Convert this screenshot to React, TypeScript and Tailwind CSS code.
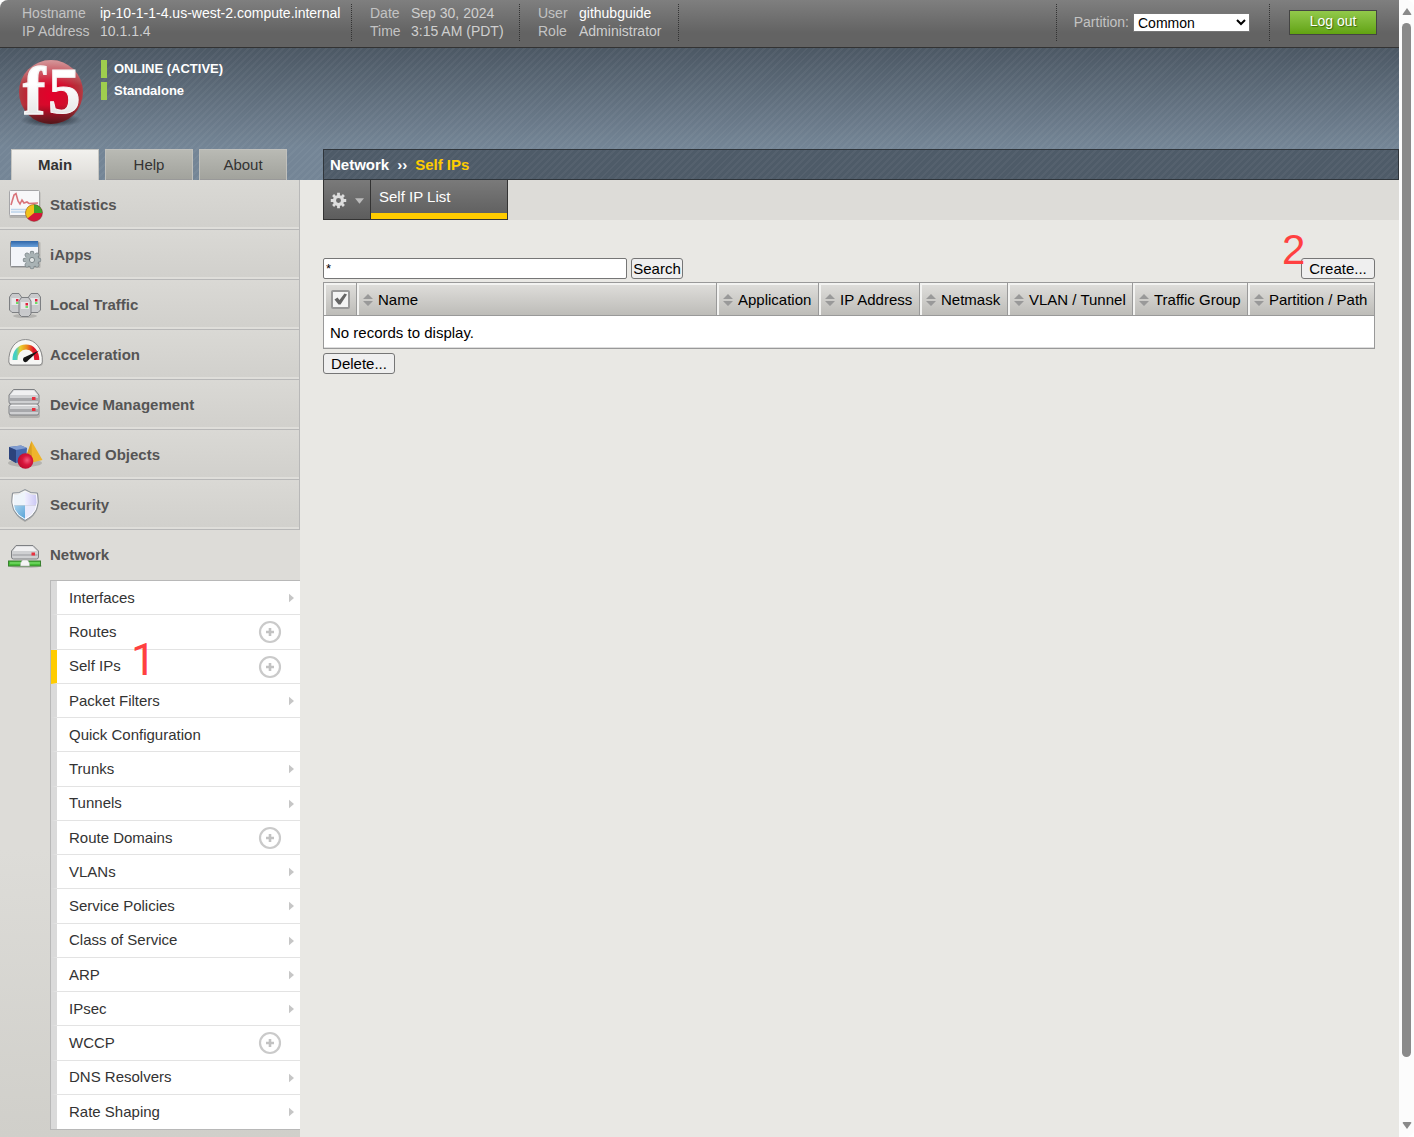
import React from "react";

const navItems = [
  { label: "Statistics", icon: <StatisticsIcon /> },
  { label: "iApps", icon: <AppsIcon /> },
  { label: "Local Traffic", icon: <TrafficIcon /> },
  { label: "Acceleration", icon: <GaugeIcon /> },
  { label: "Device Management", icon: <DevicesIcon /> },
  { label: "Shared Objects", icon: <ShapesIcon /> },
  { label: "Security", icon: <ShieldIcon /> },
];

type Mark = "arrow" | "plus" | "none";

const subItems: { label: string; mark: Mark; active?: boolean }[] = [
  { label: "Interfaces", mark: "arrow" },
  { label: "Routes", mark: "plus" },
  { label: "Self IPs", mark: "plus", active: true },
  { label: "Packet Filters", mark: "arrow" },
  { label: "Quick Configuration", mark: "none" },
  { label: "Trunks", mark: "arrow" },
  { label: "Tunnels", mark: "arrow" },
  { label: "Route Domains", mark: "plus" },
  { label: "VLANs", mark: "arrow" },
  { label: "Service Policies", mark: "arrow" },
  { label: "Class of Service", mark: "arrow" },
  { label: "ARP", mark: "arrow" },
  { label: "IPsec", mark: "arrow" },
  { label: "WCCP", mark: "plus" },
  { label: "DNS Resolvers", mark: "arrow" },
  { label: "Rate Shaping", mark: "arrow" },
];

const columns = [
  { label: "Name", width: "" },
  { label: "Application", width: "w-[102px]" },
  { label: "IP Address", width: "w-[101px]" },
  { label: "Netmask", width: "w-[88px]" },
  { label: "VLAN / Tunnel", width: "w-[125px]" },
  { label: "Traffic Group", width: "w-[115px]" },
  { label: "Partition / Path", width: "w-[127px]" },
];

function Logo() {
  return (
    <svg viewBox="0 0 72 72" className="h-[72px] w-[72px] overflow-visible" role="img" aria-label="f5">
      <defs>
        <radialGradient id="ball" cx="0.5" cy="0.55" r="0.55">
          <stop offset="0" stopColor="#e4002b" />
          <stop offset="0.45" stopColor="#d20d2b" />
          <stop offset="0.8" stopColor="#b5303a" />
          <stop offset="1" stopColor="#b4444a" />
        </radialGradient>
        <linearGradient id="ballShade" x1="0" y1="0" x2="0" y2="1">
          <stop offset="0" stopColor="#fff" stopOpacity="0.45" />
          <stop offset="0.4" stopColor="#fff" stopOpacity="0" />
          <stop offset="0.7" stopColor="#000" stopOpacity="0" />
          <stop offset="1" stopColor="#000" stopOpacity="0.55" />
        </linearGradient>
        <linearGradient id="letters" x1="0" y1="0" x2="0" y2="1">
          <stop offset="0.4" stopColor="#fff" />
          <stop offset="1" stopColor="#dcdcdc" />
        </linearGradient>
        <radialGradient id="ballShadow">
          <stop offset="0" stopColor="#111820" stopOpacity="0.9" />
          <stop offset="1" stopColor="#111820" stopOpacity="0" />
        </radialGradient>
      </defs>
      <ellipse cx="36" cy="62" rx="31" ry="7" fill="url(#ballShadow)" />
      <circle cx="36" cy="34" r="32" fill="url(#ball)" />
      <circle cx="36" cy="34" r="32" fill="url(#ballShade)" />
      <g fontFamily="Liberation Serif, serif" fontWeight="700" fill="url(#letters)" stroke="#f6f6f6">
        <text x="8" y="56" fontSize="67" strokeWidth="1.500">
          f
        </text>
        <text x="33" y="55" fontSize="65" strokeWidth="1">
          5
        </text>
      </g>
    </svg>
  );
}

function StatisticsIcon() {
  return (
    <svg viewBox="0 0 36 36" className="h-9 w-9">
      <rect x="1.500" y="4" width="31" height="26" rx="1" fill="#000" opacity="0.15" />
      <rect x="1.500" y="2.500" width="30" height="25" rx="1" fill="#f7f7f9" stroke="#a5a5a8" />
      <path d="M3 17 6 7 8 5.500 10 13 12 16 14 12 16 15 19 14 21 15.500 30 15" fill="none" stroke="#d9747a" strokeWidth="1.600" />
      <path d="M3 21.500h20M3 24h17" stroke="#bcd3ea" strokeWidth="1.500" />
      <circle cx="26" cy="25" r="8.500" fill="#d3173a" />
      <path d="M26 25V16.500a8.500 8.500 0 0 0-6.500 14z" fill="#f1c21b" />
      <path d="M26 25V16.500a8.500 8.500 0 0 1 8.500 8.500z" fill="#3fa32c" />
      <circle cx="26" cy="25" r="8.500" fill="none" stroke="#5b3b1d" strokeOpacity="0.5" strokeWidth="0.700" />
    </svg>
  );
}

function Gear({ fill, stroke, hole }: { fill: string; stroke: string; hole: string }) {
  return (
    <>
      <g stroke={stroke} strokeWidth="4.600" strokeLinecap="round">
        <path d="M0-7V7M-7 0H7M-5-5 5 5M5-5-5 5" />
      </g>
      <g stroke={fill} strokeWidth="3.200" strokeLinecap="round">
        <path d="M0-7V7M-7 0H7M-5-5 5 5M5-5-5 5" />
      </g>
      <circle r="6.500" fill={fill} />
      <circle r="2.600" fill={hole} stroke={stroke} />
    </>
  );
}

function AppsIcon() {
  return (
    <svg viewBox="0 0 36 36" className="h-9 w-9">
      <defs>
        <linearGradient id="titleBar" x1="0" y1="0" x2="0" y2="1">
          <stop offset="0" stopColor="#2f66a8" />
          <stop offset="1" stopColor="#6aa0da" />
        </linearGradient>
      </defs>
      <rect x="2.500" y="4" width="30" height="26" rx="1" fill="#000" opacity="0.15" />
      <rect x="2.500" y="3.500" width="28" height="25" rx="1" fill="#f3f5f9" stroke="#8b8d90" />
      <rect x="3" y="3" width="27" height="6" fill="url(#titleBar)" />
      <g transform="translate(24 22)">
        <Gear fill="#a9b3b5" stroke="#7d878a" hole="#dfe3e3" />
      </g>
    </svg>
  );
}

function TrafficIcon() {
  const server = (
    <>
      <path d="M.5 4 3 .5h7L12.500 4v13L10 19.500H3L.5 17z" fill="#c9cacc" stroke="#7d7f82" />
      <path d="M2.500 5h8v11h-8z" fill="#e6e6e8" />
      <path d="M2.500 13h8M2.500 15h8" stroke="#aaabae" />
      <rect x="7" y="6" width="2.500" height="2.500" fill="#e0223c" />
      <rect x="7" y="9" width="2.500" height="2" fill="#6fdc6a" />
    </>
  );
  return (
    <svg viewBox="0 0 36 36" className="h-9 w-9">
      <ellipse cx="17" cy="28" rx="12" ry="2" fill="#000" opacity="0.15" />
      <g transform="translate(1 5)">{server}</g>
      <g transform="translate(20 5)">{server}</g>
      <g transform="translate(10.500 9)">{server}</g>
    </svg>
  );
}

function GaugeIcon() {
  return (
    <svg viewBox="0 0 36 36" className="h-9 w-9">
      <defs>
        <linearGradient id="dial" x1="0" y1="0" x2="1" y2="0">
          <stop offset="0.050" stopColor="#43cfc4" />
          <stop offset="0.250" stopColor="#e8cf2f" />
          <stop offset="0.550" stopColor="#ee8a1c" />
          <stop offset="0.850" stopColor="#e0162b" />
        </linearGradient>
      </defs>
      <path d="M.8 25C-.5 12 7 2.500 18 2.500S36 12 35 25q-.3 3-3 3H3.500Q1 28 .8 25z" fill="#000" opacity="0.150" />
      <path d="M.8 24C.3 11 7.500 1.500 17.500 1.500S35 11 34.300 24q-.2 3-3 3h-27q-3 0-3.500-3z" fill="#f7f7f5" stroke="#8b8b8b" />
      <path d="M7 22C7 14 11.500 9 18 9s10.800 5 10.800 13" fill="none" stroke="url(#dial)" strokeWidth="5" />
      <path d="M31 12.500 20 22.500a2.600 2.600 0 1 1-3-3.500z" fill="#151515" />
    </svg>
  );
}

function DiskUnit() {
  return (
    <>
      <path d="M5.500.5h21L31 6v7q0 2-2 2H3q-2 0-2-2V6z" fill="#cfd0d2" stroke="#7e8083" />
      <path d="M6 1.500h20L29.500 6h-27z" fill="#f0f0f1" />
      <path d="M2 9h28v3H2z" fill="#a7a8ab" />
      <rect x="24" y="8" width="3.500" height="3" fill="#e8303f" />
    </>
  );
}

function DevicesIcon() {
  return (
    <svg viewBox="0 0 36 36" className="h-9 w-9">
      <rect x="1" y="25" width="31" height="5" rx="2" fill="#000" opacity="0.15" />
      <g transform="translate(0 12)"><DiskUnit /></g>
      <g transform="translate(0 1)"><DiskUnit /></g>
    </svg>
  );
}

function ShapesIcon() {
  return (
    <svg viewBox="0 0 36 36" className="h-9 w-9">
      <defs>
        <radialGradient id="sphere" cx="0.6" cy="0.45" r="0.6">
          <stop offset="0" stopColor="#f25c7c" />
          <stop offset="0.5" stopColor="#d9163c" />
          <stop offset="1" stopColor="#b90d2e" />
        </radialGradient>
      </defs>
      <ellipse cx="17" cy="25" rx="17" ry="4" fill="#000" opacity="0.15" />
      <path d="m23.500 3 11 19L24 24.500 17 22z" fill="#efb52c" />
      <path d="M23.500 3 24 24.500 17 22z" fill="#d9a022" />
      <path d="m1 9 12-1.500 6 2.500-1 13-10 2-7-4z" fill="#4567ad" />
      <path d="m1 9 12-1.500 6 2.500-11 2z" fill="#7f9cd0" />
      <path d="m1 9 7 3v13l-7-4z" fill="#2c437c" />
      <circle cx="17.500" cy="23" r="7.800" fill="url(#sphere)" />
    </svg>
  );
}

function ShieldIcon() {
  return (
    <svg viewBox="0 0 36 36" className="h-9 w-9">
      <defs>
        <clipPath id="shieldClip">
          <path d="M17 3q6 4.500 12 3.500Q32 25 17 32 2 25 5 6.500 11 7.500 17 3z" />
        </clipPath>
        <linearGradient id="shieldBlue" x1="0" y1="0" x2="1" y2="1">
          <stop offset="0" stopColor="#b9dcf2" />
          <stop offset="1" stopColor="#4a9bd4" />
        </linearGradient>
        <linearGradient id="shieldViolet" x1="0" y1="0" x2="1" y2="0">
          <stop offset="0" stopColor="#f0efff" />
          <stop offset="1" stopColor="#b5b0ee" />
        </linearGradient>
      </defs>
      <path d="M17 2q6 4.500 13 3.500Q34 26 17 34 1 26 4 5.500 11 6.500 17 2z" fill="#000" opacity="0.180" />
      <g clipPath="url(#shieldClip)">
        <path d="M0 0h17v17.500H0z" fill="#eef4fb" />
        <path d="M17 0h19v17.500H17z" fill="url(#shieldViolet)" />
        <path d="M0 17.500h17V36H0z" fill="url(#shieldBlue)" />
        <path d="M17 17.500h19V36H17z" fill="#e9e9fb" />
      </g>
      <path d="M17 1.500q6 4.500 12.500 3.500Q33.500 25 17 32.500.5 25 4.500 5 11 6 17 1.500z" fill="none" stroke="#8d949c" />
      <path d="M17 3q6 4 11.500 3.300Q32 24.500 17 31.200 2 24.500 5.500 6.300 11 7 17 3z" fill="none" stroke="#fff" />
    </svg>
  );
}

function NetworkIcon() {
  return (
    <svg viewBox="0 0 36 36" className="h-9 w-9">
      <ellipse cx="17" cy="28" rx="17" ry="2" fill="#000" opacity="0.15" />
      <g transform="translate(1.500 7)">
        <path d="M6.500.5h17L29 6v6q0 2-2 2H4q-2 0-2-2V6z" fill="#cfd0d2" stroke="#7e8083" />
        <path d="M7 1.500h16L27.500 6h-24z" fill="#f0f0f1" />
        <path d="M3 9h25v2H3z" fill="#b4b5b8" />
        <rect x="22" y="7.500" width="3.500" height="3" fill="#e8303f" />
      </g>
      <rect x=".5" y="23" width="32" height="5" fill="#45bd36" stroke="#39802f" />
      <path d="M2 25h30" stroke="#8ae67b" />
      <path d="M12.500 28v-3l2-3h5l2 3v3z" fill="#f5f5f5" stroke="#a3a3a3" strokeWidth="0.500" />
    </svg>
  );
}

function PlusIcon() {
  return (
    <svg viewBox="0 0 24 24" className="h-6 w-6">
      <circle cx="12" cy="12" r="10" fill="none" stroke="#cacaca" strokeWidth="2.200" />
      <path d="M12 8v8M8 12h8" stroke="#c2c2c2" strokeWidth="2.600" />
    </svg>
  );
}

function SortIcon() {
  return (
    <svg viewBox="0 0 10 12" className="h-3 w-[10px] shrink-0">
      <path d="M5 0 10 5H0zM0 7h10L5 12z" fill="#999" />
    </svg>
  );
}

function Pair({ rows, columns }: { rows: [string, string, boolean][]; columns: string }) {
  return (
    <dl className={"grid text-[14px] leading-[18px] whitespace-nowrap text-[#c3c3c3] " + columns}>
      {rows.map(([k, v, strong]) => (
        <React.Fragment key={k}>
          <dt>{k}</dt>
          <dd className={strong ? "text-white" : "text-[#cfcfcf]"}>{v}</dd>
        </React.Fragment>
      ))}
    </dl>
  );
}

const divider = "h-[37px] w-px shrink-0 border-l border-dotted border-[#333]";
const plainButton =
  "block h-[21px] rounded-[3px] border border-[#767676] bg-[#efefef] text-[15px] leading-[19px] text-black";

export default function App() {
  return (
    <div className="flex min-h-screen bg-white font-['Liberation_Sans',Arial,sans-serif] text-[15px] text-[#333]">
      <div className="flex min-w-0 flex-1 flex-col overflow-hidden rounded-tl-lg bg-[#e9e8e4]">
        <header className="flex h-12 items-start border-b border-[#333] bg-linear-to-b from-[#7f7f7f] to-[#636363] to-70% pt-1">
          <div className="w-[351px] pl-[22px]">
            <Pair
              columns="grid-cols-[78px_auto]"
              rows={[
                ["Hostname", "ip-10-1-1-4.us-west-2.compute.internal", true],
                ["IP Address", "10.1.1.4", false],
              ]}
            />
          </div>
          <div className={divider} />
          <div className="w-[167px] pl-[18px]">
            <Pair
              columns="grid-cols-[41px_auto]"
              rows={[
                ["Date", "Sep 30, 2024", false],
                ["Time", "3:15 AM (PDT)", false],
              ]}
            />
          </div>
          <div className={divider} />
          <div className="w-[158px] pl-[18px]">
            <Pair
              columns="grid-cols-[41px_auto]"
              rows={[
                ["User", "githubguide", true],
                ["Role", "Administrator", false],
              ]}
            />
          </div>
          <div className={divider} />
          <div className="ml-auto flex items-start">
            <div className={divider} />
            <div className="flex items-center pt-2 pl-[17px]">
              <label htmlFor="partition" className="mr-1 text-[14px] leading-[20px] text-[#c3c3c3]">
                Partition:
              </label>
              <select
                id="partition"
                defaultValue="Common"
                className="h-[19px] w-[117px] border border-[#767676] bg-white text-[14px] leading-[17px] text-black"
              >
                <option>Common</option>
              </select>
            </div>
            <div className={divider + " ml-[19px]"} />
            <button
              type="button"
              className="mt-[6px] mr-[22px] ml-[19px] h-[25px] w-[88px] border border-[#444] bg-linear-to-b from-[#92c94a] to-[#62a30f] pb-[3px] text-[14px] leading-[20px] text-white [text-shadow:1px_1px_1px_#3c6a08]"
            >
              Log out
            </button>
          </div>
        </header>

        <div className="flex flex-1 flex-col">
          <div className="flex flex-col bg-[repeating-linear-gradient(135deg,rgba(255,255,255,0.04)_0px,rgba(255,255,255,0.04)_2px,transparent_2px,transparent_5px),linear-gradient(to_bottom,#4c5864,#748596_75%)]">
            <div className="flex h-[101px] items-start pt-[10px] pl-[15px]">
              <Logo />
              <ul className="ml-[14px] flex flex-col gap-1 pt-[2px] text-[13px] leading-[18px] font-bold text-white">
                <li className="border-l-[6px] border-[#9fce4e] pl-[7px]">ONLINE (ACTIVE)</li>
                <li className="border-l-[6px] border-[#9fce4e] pl-[7px]">Standalone</li>
              </ul>
            </div>
            <div className="flex h-[31px]">
              <div role="tablist" className="flex w-[323px] shrink-0 gap-[6px] pl-[11px]">
                <button role="tab" aria-selected="true" type="button" className="w-[88px] border border-b-0 border-[#c5c5c1] bg-linear-to-b from-[#f2f1ee] to-[#dedcd8] font-bold text-[#333]">
                  Main
                </button>
                <button role="tab" aria-selected="false" type="button" className="w-[88px] border border-b-0 border-[#c0c0bc] bg-linear-to-b from-[#b9bab4] to-[#a1a29c] shadow-[inset_0_-1px_0_#999]">
                  Help
                </button>
                <button role="tab" aria-selected="false" type="button" className="w-[88px] border border-b-0 border-[#c0c0bc] bg-linear-to-b from-[#b9bab4] to-[#a1a29c] shadow-[inset_0_-1px_0_#999]">
                  About
                </button>
              </div>
              <nav
                aria-label="Breadcrumb"
                className="flex flex-1 items-center border border-[#2f353b] bg-[repeating-linear-gradient(135deg,rgba(255,255,255,0.04)_0px,rgba(255,255,255,0.04)_2px,transparent_2px,transparent_5px)] bg-[#4e5b68] pt-[2px] pl-[6px] font-bold text-white"
              >
                <a href="#network">Network</a>
                <span className="mx-2">››</span>
                <span className="text-[#fc0]">Self IPs</span>
              </nav>
            </div>
          </div>

          <div className="flex flex-1">
            <aside className="w-[300px] shrink-0 bg-[linear-gradient(to_bottom,#dddcd8_70%,#d0cfca)]">
              <nav>
                {navItems.map((item) => (
                  <a
                    key={item.label}
                    href="#section"
                    className="flex h-[50px] items-center border-r border-b border-[#b8b8b8] bg-linear-to-b from-[#dad9d5] to-[#d1d0cc] pt-[2px] pl-2 font-bold text-[#555] shadow-[inset_0_-2px_0_#dfdeda]"
                  >
                    {item.icon}
                    <span className="ml-[6px]">{item.label}</span>
                  </a>
                ))}
                <a href="#network" className="flex h-[50px] items-center pt-px pl-2 font-bold text-[#555]">
                  <NetworkIcon />
                  <span className="ml-[6px]">Network</span>
                </a>
                <ul className="ml-[50px] grid h-[550px] auto-rows-fr border-y border-l border-[#b8b8b8] bg-white">
                  {subItems.map((item) => (
                    <li
                      key={item.label}
                      className={
                        "relative border-b border-b-[#e3e3e3] border-l-[6px] last:border-b-0 " +
                        (item.active ? "border-l-[#fc0]" : "border-l-[#dadada]")
                      }
                    >
                      <a href="#item" className="flex h-full items-center justify-between pt-px pl-3 text-[#333]">
                        {item.label}
                        {item.mark === "plus" && (
                          <span className="mr-[18px]">
                            <PlusIcon />
                          </span>
                        )}
                        {item.mark === "arrow" && (
                          <svg viewBox="0 0 6 10" className="mr-[6px] h-[10px] w-[5px]">
                            <path d="M0 0 6 5 0 10z" fill="#c6c6c6" />
                          </svg>
                        )}
                      </a>
                      {item.active && (
                        <span className="absolute top-[-14px] left-[74px] font-['Roboto',sans-serif] text-[44px] leading-[48px] text-[#ff4040]">1</span>
                      )}
                    </li>
                  ))}
                </ul>
              </nav>
            </aside>

            <main className="min-w-0 flex-1 pl-[23px]">
              <div className="flex h-10 bg-[#dddcd8]">
                <button
                  type="button"
                  aria-label="Options"
                  className="flex w-12 items-center gap-2 border border-t-0 border-[#333] bg-linear-to-b from-[#7a7a7a] to-[#5d5d5d] pt-[2px] pl-[6px]"
                >
                  <svg viewBox="-11 -11 22 22" className="h-[17px] w-[17px]">
                    <g stroke="#ddd" strokeWidth="3.600">
                      <path d="M0-10V-5M0 10V5M-10 0H-5M10 0H5M-7-7-4-4M7 7 4 4M7-7 4-4M-7 7-4 4" />
                    </g>
                    <circle r="5.200" fill="none" stroke="#ddd" strokeWidth="4" />
                  </svg>
                  <svg viewBox="0 0 10 6" className="h-[6px] w-[9px]">
                    <path d="M0 0h10L5 6z" fill="#bbb" />
                  </svg>
                </button>
                <a
                  href="#list"
                  className="flex w-[137px] flex-col justify-between border-r border-b border-[#333] bg-linear-to-b from-[#7a7a7a] to-[#5d5d5d] text-white"
                >
                  <span className="pt-2 pl-2 leading-[18px]">Self IP List</span>
                  <span className="h-[6px] bg-[#fc0]" />
                </a>
              </div>

              <div className="pt-[38px] pr-6">
                <form className="flex" onSubmit={(e) => e.preventDefault()}>
                  <input
                    aria-label="Filter"
                    defaultValue="*"
                    className="h-[21px] w-[304px] rounded-[2px] border border-[#767676] bg-white px-[2px] text-[13px] text-black"
                  />
                  <button type="submit" className={plainButton + " ml-1 w-[52px]"}>
                    Search
                  </button>
                  <div className="relative ml-auto">
                    <button type="button" className={plainButton + " w-[74px]"}>
                      Create...
                    </button>
                    <span className="absolute top-[-32px] left-[-19px] text-[42px] leading-[48px] text-[#ff4040]">2</span>
                  </div>
                </form>

                <table className="mt-[3px] w-full table-fixed border-collapse border border-[#999] text-black">
                  <thead>
                    <tr className="h-[33px] bg-linear-to-b from-[#e0dfdc] to-[#bcbbb7]">
                      <th className="w-[33px] border border-[#999] p-0 shadow-[inset_2px_2px_0_#f3f3f1]">
                        <label className="relative mx-auto flex h-[19px] w-[19px] items-center justify-center">
                          <input
                            type="checkbox"
                            aria-label="Select all"
                            defaultChecked
                            className="absolute inset-0 appearance-none rounded-[2px] border-2 border-[#999] bg-[#f4f4f4]"
                          />
                          <svg viewBox="0 0 13 12" className="relative h-3 w-[13px]">
                            <path d="M.5 6.500 3.500 4.500 5.500 7 10.500.5 13 1.500 6.500 11.500H4.500z" fill="#666" />
                          </svg>
                        </label>
                      </th>
                      {columns.map((c) => (
                        <th
                          key={c.label}
                          className={"border border-[#999] p-0 font-normal shadow-[inset_2px_2px_0_#f3f3f1] " + c.width}
                        >
                          <button type="button" className="flex w-full items-center gap-[5px] pt-[2px] pl-[6px] whitespace-nowrap">
                            <SortIcon />
                            {c.label}
                          </button>
                        </th>
                      ))}
                    </tr>
                  </thead>
                  <tbody>
                    <tr className="h-[33px] bg-white">
                      <td colSpan={8} className="border border-[#999] pt-[3px] pb-0 pl-[6px] shadow-[inset_0_-1px_0_#ddd]">
                        No records to display.
                      </td>
                    </tr>
                  </tbody>
                </table>

                <button type="button" className={plainButton + " mt-1 w-[72px]"}>
                  Delete...
                </button>
              </div>
            </main>
          </div>
        </div>
      </div>

      <div aria-hidden="true" className="sticky top-0 flex h-screen w-[15px] shrink-0 flex-col items-center rounded-r-lg bg-[#fcfcfc] py-2">
        <svg viewBox="0 0 10 8" className="h-[7px] w-[10px]">
          <path d="M5 0 10 7Q10 8 9 8H1Q0 8 0 7z" fill="#8a8a8a" />
        </svg>
        <div className="mt-2 mb-[65px] w-[9px] flex-1 rounded-full bg-[#8a8a8a]" />
        <svg viewBox="0 0 10 8" className="h-[7px] w-[10px]">
          <path d="M5 8 0 1Q0 0 1 0H9Q10 0 10 1z" fill="#8a8a8a" />
        </svg>
      </div>
    </div>
  );
}
